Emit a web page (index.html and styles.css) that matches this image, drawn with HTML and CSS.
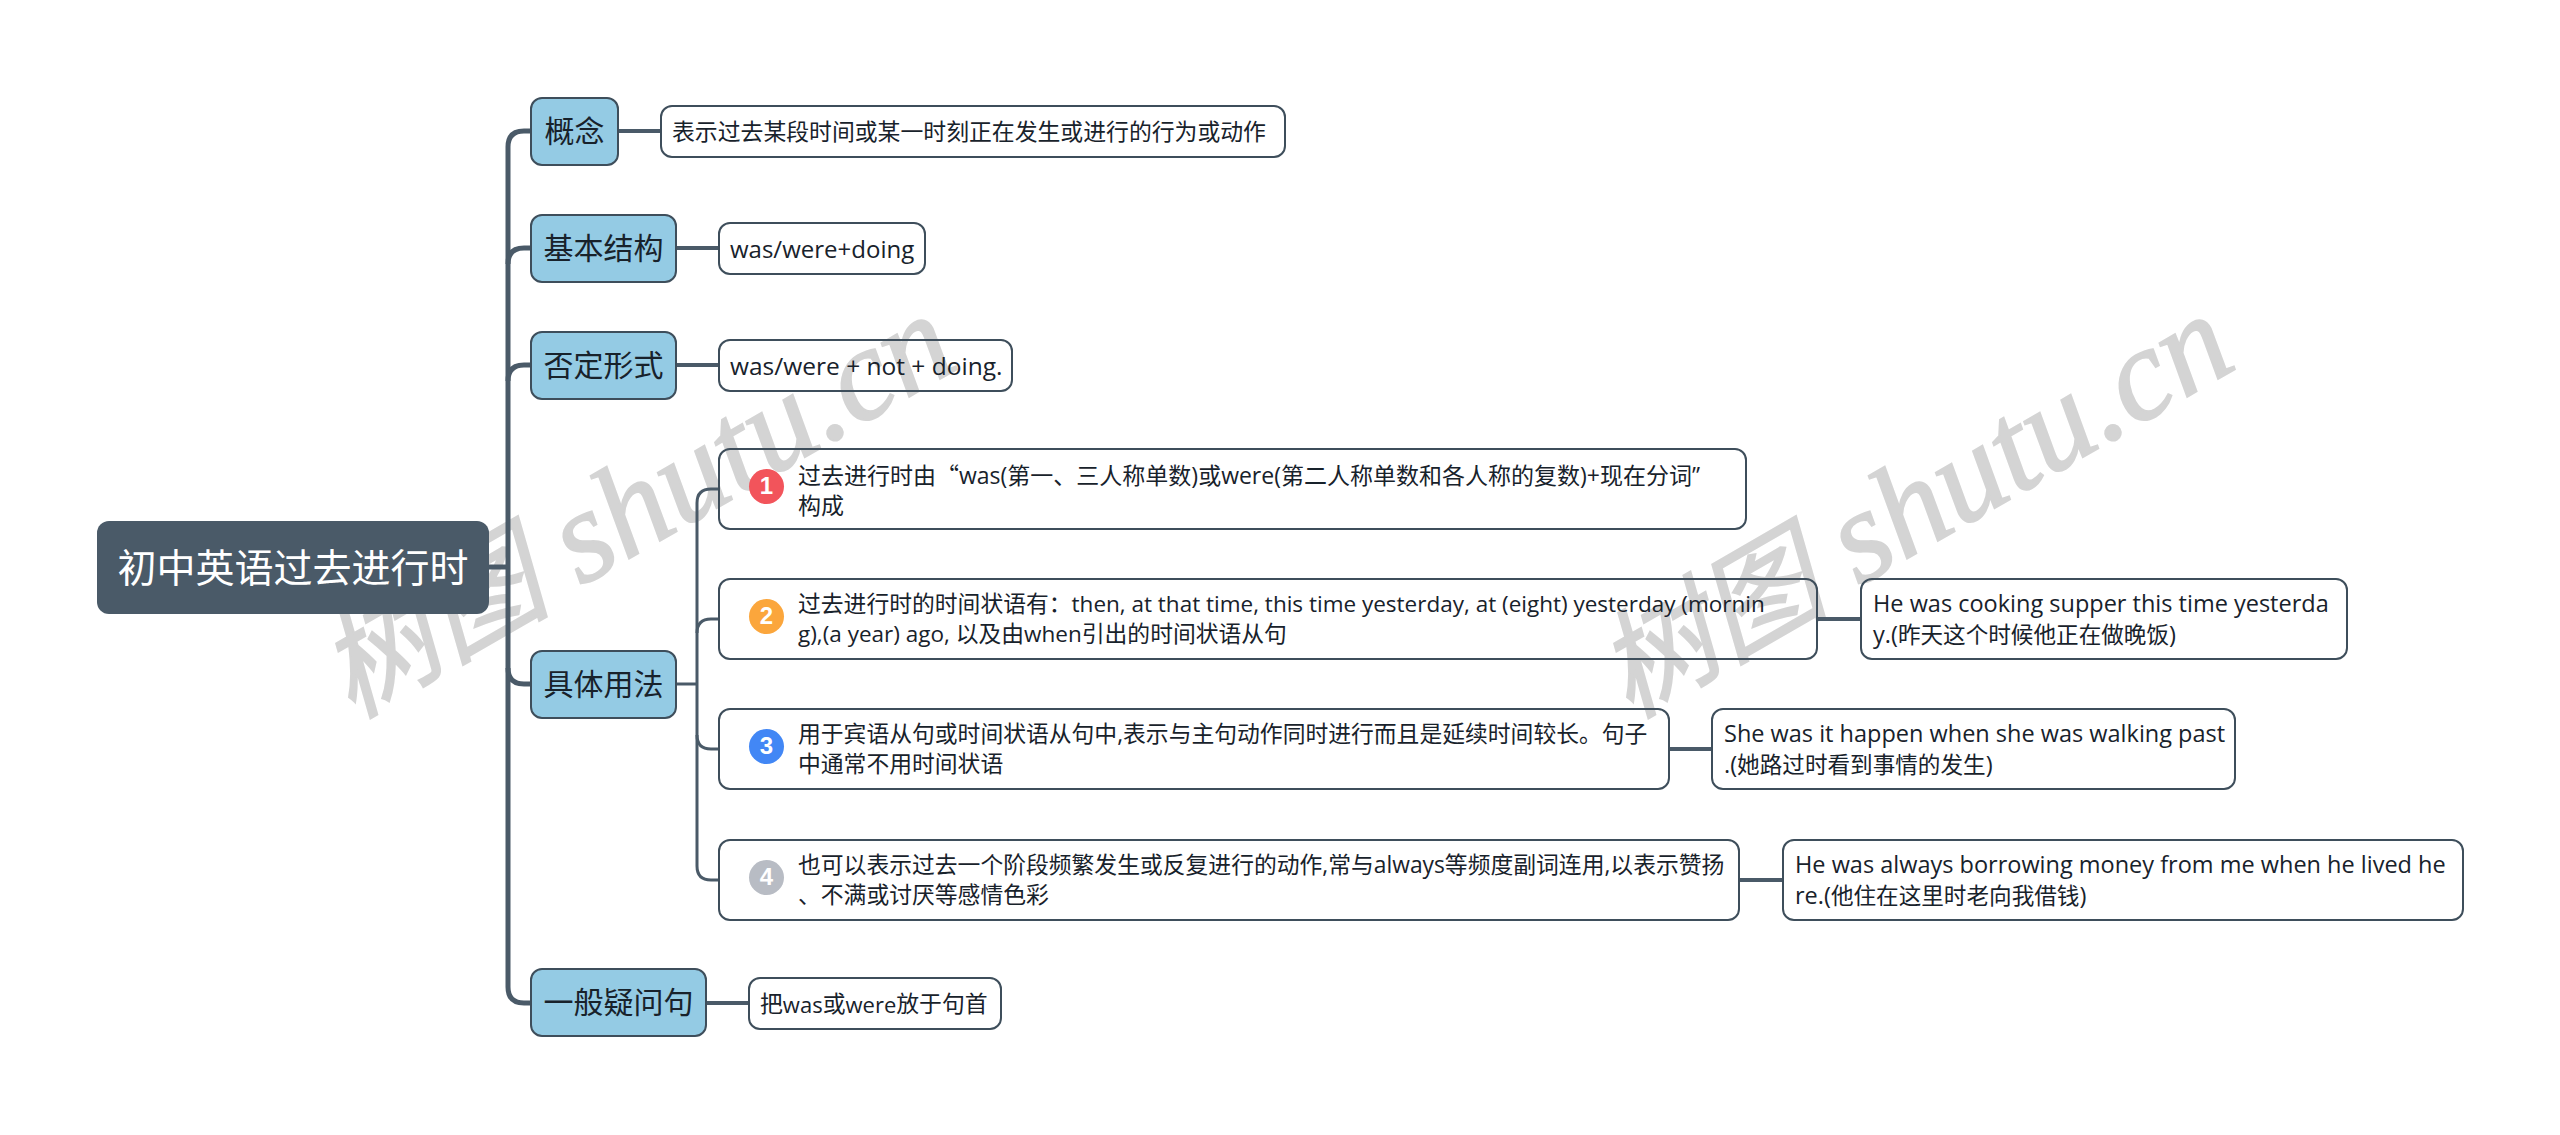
FILE: index.html
```html
<!DOCTYPE html>
<html lang="zh-CN">
<head>
<meta charset="utf-8">
<title>初中英语过去进行时</title>
<link rel="stylesheet" href="styles.css">
</head>
<body>
<main class="canvas">
  <div class="mark m1"><span class="mark-cjk">树图</span> shutu.cn</div>
  <div class="mark m2"><span class="mark-cjk">树图</span> shutu.cn</div>

  <svg class="links" width="2560" height="1135" viewBox="0 0 2560 1135" fill="none">
    <g class="thick">
      <path d="M488 567H508"/>
      <path d="M530 131H524Q508 131 508 147V987Q508 1003 524 1003H530"/>
      <path d="M508 264Q508 248 524 248H530"/>
      <path d="M508 381Q508 365 524 365H530"/>
      <path d="M508 668Q508 684 524 684H530"/>
    </g>
    <g class="mid">
      <path d="M618 131H660"/>
      <path d="M676 248H718"/>
      <path d="M676 365H718"/>
      <path d="M706 1003H748"/>
      <path d="M1818 619H1860"/>
      <path d="M1670 749H1711"/>
      <path d="M1739 880H1782"/>
    </g>
    <g class="thin">
      <path d="M676 684H697"/>
      <path d="M718 489H711Q697 489 697 503V866Q697 880 711 880H718"/>
      <path d="M697 633Q697 619 711 619H718"/>
      <path d="M697 735Q697 749 711 749H718"/>
    </g>
  </svg>

  <div class="node root"><span class="label">初中英语过去进行时</span></div>

  <div class="node topic t1"><span class="label">概念</span></div>
  <div class="node topic t2"><span class="label">基本结构</span></div>
  <div class="node topic t3"><span class="label">否定形式</span></div>
  <div class="node topic t4"><span class="label">具体用法</span></div>
  <div class="node topic t5"><span class="label">一般疑问句</span></div>

  <div class="node leaf l1">表示过去某段时间或某一时刻正在发生或进行的行为或动作</div>
  <div class="node leaf l2"><span class="en">was/were+doing</span></div>
  <div class="node leaf l3"><span class="en">was/were + not + doing.</span></div>
  <div class="node leaf l4">把<span class="en-s">was</span>或<span class="en-s">were</span>放于句首</div>

  <div class="node item i1"><span class="badge red">1</span><p class="body">过去进行时由<span class="cjk">“</span>was(第一、三人称单数)或were(第二人称单数和各人称的复数)+现在分词”<br>构成</p></div>
  <div class="node item i2"><span class="badge orange">2</span><p class="body">过去进行时的时间状语有：<span class="en-m">then, at that time, this time yesterday, at (eight) yesterday (mornin</span><br><span class="en-m">g),(a year) ago, </span>以及由<span class="en-m">when</span>引出的时间状语从句</p></div>
  <div class="node item i3"><span class="badge blue">3</span><p class="body">用于宾语从句或时间状语从句中,表示与主句动作同时进行而且是延续时间较长。句子<br>中通常不用时间状语</p></div>
  <div class="node item i4"><span class="badge grey">4</span><p class="body">也可以表示过去一个阶段频繁发生或反复进行的动作,常与always等频度副词连用,以表示赞扬<br>、不满或讨厌等感情色彩</p></div>

  <div class="node note n2"><p class="body-note"><span class="en">He was cooking supper this time yesterda</span><br><span class="en">y.(</span>昨天这个时候他正在做晚饭<span class="en">)</span></p></div>
  <div class="node note n3"><p class="body-note"><span class="en">She was it happen when she was walking past</span><br><span class="en">.(</span>她路过时看到事情的发生<span class="en">)</span></p></div>
  <div class="node note n4"><p class="body-note"><span class="en">He was always borrowing money from me when he lived he</span><br><span class="en">re.(</span>他住在这里时老向我借钱<span class="en">)</span></p></div>
</main>
</body>
</html>
```
FILE: styles.css
```css
* { box-sizing: border-box; }
html, body { margin: 0; padding: 0; background: #fff; }
.canvas {
  position: relative;
  width: 2560px;
  height: 1135px;
  overflow: hidden;
  background: #fff;
  font-family: "Open Sans", "Noto Sans CJK SC", sans-serif;
  color: #18222b;
}
.links { position: absolute; left: 0; top: 0; }
.thick path { stroke: #4a5a68; stroke-width: 5; }
.mid path { stroke: #4a5a68; stroke-width: 4; }
.thin path { stroke: #4a5a68; stroke-width: 3; }

.node {
  position: absolute;
  display: flex;
  align-items: center;
  border: 2px solid #3e4e5b;
  border-radius: 12px;
  white-space: nowrap;
}
.label { position: relative; top: -3px; }
.root {
  left: 97px; top: 521px; width: 392px; height: 93px;
  justify-content: center;
  background: #4a5a68;
  border: 0;
  color: #fff;
  font-size: 39px;
}
.topic {
  left: 530px; height: 69px;
  justify-content: center;
  background: #94cbe4;
  font-size: 30px;
}
.t1 { top: 97px; width: 89px; }
.t2 { top: 214px; width: 147px; }
.t3 { top: 331px; width: 147px; }
.t4 { top: 650px; width: 147px; }
.t5 { top: 968px; width: 177px; }

.leaf, .note, .item { line-height: 30px; }
.leaf { height: 53px; padding: 0 10px; font-size: 22.85px; }
.leaf .en { font-size: 24.5px; }
.leaf .en-s { font-size: 22px; }
.l1 { left: 660px; top: 105px; width: 626px; }
.l2 { left: 718px; top: 222px; width: 208px; }
.l2 .en { font-size: 24px; }
.l3 { left: 718px; top: 339px; width: 295px; }
.l4 { left: 748px; top: 977px; width: 254px; }

.item { left: 718px; height: 82px; padding-left: 29px; font-size: 22.8px; }
.i1 { top: 448px; width: 1029px; font-size: 23px; }
.i2 { top: 578px; width: 1100px; }
.i3 { top: 708px; width: 952px; }
.i4 { top: 839px; width: 1022px; }
.body { margin: 0 0 0 14px; }
.cjk { font-family: "Noto Sans CJK SC", sans-serif; }
.en-m { font-size: 22.5px; }

.badge {
  flex: none;
  width: 35px; height: 35px;
  margin-top: -6px;
  border-radius: 50%;
  display: flex; align-items: center; justify-content: center;
  color: #fff;
  font: 700 24px/1 "Liberation Sans", sans-serif;
}
.red { background: #f2545b; }
.orange { background: #fba63c; }
.blue { background: #4287f5; }
.grey { background: #b8bcc4; }

.note { height: 82px; padding: 0 11px; font-size: 22.6px; }
.note .en { font-size: 23.5px; }
.body-note { margin: 0; }
.n2 { left: 1860px; top: 578px; width: 488px; }
.n3 { left: 1711px; top: 708px; width: 525px; }
.n4 { left: 1782px; top: 839px; width: 682px; }

.mark {
  position: absolute;
  font: italic 400 131px/1 "Liberation Serif", "Noto Sans CJK SC", serif;
  color: #d4d4d4;
  -webkit-text-stroke: 2px #d4d4d4;
  white-space: nowrap;
  transform-origin: 0 100%;
  transform: rotate(-30deg);
}
.mark-cjk { font-size: 116px; }
.m1 { left: 362px; top: 606px; }
.m2 { left: 1640px; top: 606px; }
```
